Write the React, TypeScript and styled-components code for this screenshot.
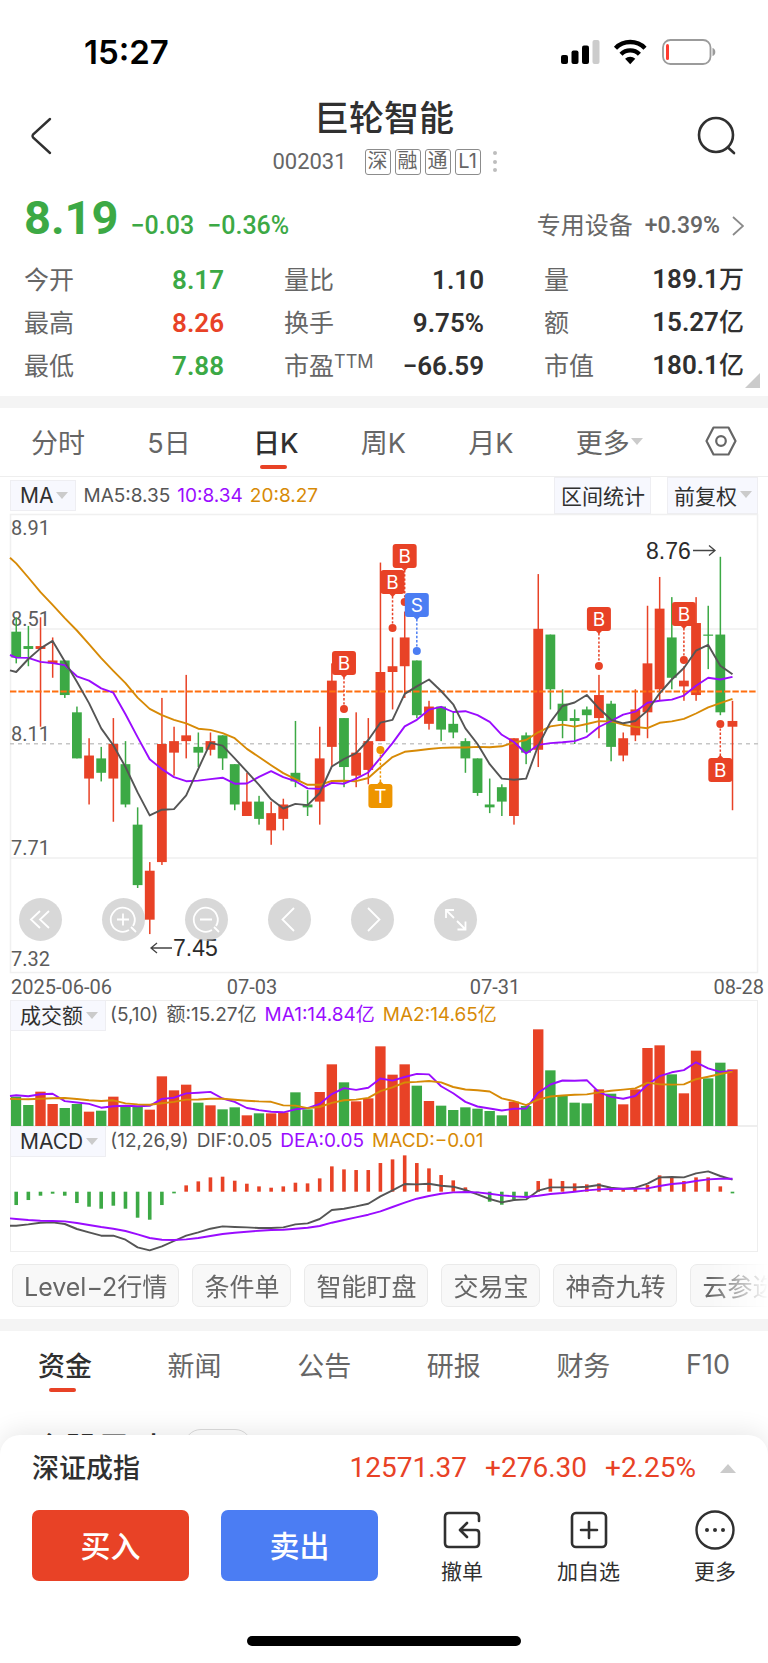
import React from 'react';
import styled, { createGlobalStyle } from 'styled-components';

const RED = '#e84226';
const GREEN = '#3ca945';
const BLUE = '#4b7df3';
const AMBER = '#ee9500';
const MA_GRAY = '#555555';
const MA_PURPLE = '#9a0cff';
const MA_GOLD = '#d78a06';
const INK = '#303030';
const MUTED = '#666666';

const TEXT_FONT = "Inter, 'Noto Sans CJK SC', sans-serif";
const NUM_FONT = "Roboto, 'Noto Sans CJK SC', sans-serif";

const GlobalStyle = createGlobalStyle`
  * { box-sizing: border-box; }
  body { margin: 0; background: #fff; color: ${INK}; font-family: ${TEXT_FONT}; }
  button { font: inherit; color: inherit; border: 0; padding: 0; background: none; cursor: pointer; }
  a { color: inherit; text-decoration: none; }
`;

/* ---------- market data ---------- */

type Candle = [open: number, close: number, high: number, low: number];

const candles: Candle[] = [
  [8.5, 8.41, 8.55, 8.39], [8.45, 8.44, 8.52, 8.38], [8.44, 8.45, 8.55, 8.17], [8.39, 8.4, 8.48, 8.34],
  [8.4, 8.28, 8.4, 8.27], [8.22, 8.06, 8.24, 8.06], [7.99, 8.07, 8.13, 7.9], [8.06, 8.01, 8.1, 7.98],
  [7.99, 8.11, 8.2, 7.84], [8.04, 7.9, 8.12, 7.89], [7.83, 7.62, 7.89, 7.61], [7.5, 7.67, 7.7, 7.45],
  [7.7, 8.11, 8.27, 7.69], [8.08, 8.12, 8.17, 8.0], [8.12, 8.14, 8.35, 8.06], [8.1, 8.08, 8.15, 8.03],
  [8.09, 8.12, 8.15, 8.07], [8.14, 8.06, 8.14, 8.02], [8.04, 7.9, 8.04, 7.88], [7.86, 7.91, 8.01, 7.86],
  [7.91, 7.85, 7.93, 7.83], [7.81, 7.87, 7.91, 7.76], [7.85, 7.9, 7.92, 7.81], [8.01, 7.98, 8.19, 7.96],
  [7.9, 7.89, 7.95, 7.86], [7.91, 8.06, 8.17, 7.83], [8.1, 8.33, 8.39, 8.03], [8.2, 8.03, 8.2, 7.96],
  [8.0, 8.08, 8.22, 7.96], [8.02, 8.12, 8.2, 7.97], [8.12, 8.36, 8.74, 8.12], [8.36, 8.38, 8.48, 8.23],
  [8.38, 8.48, 8.57, 8.27], [8.4, 8.21, 8.4, 8.2], [8.18, 8.24, 8.26, 8.16], [8.24, 8.16, 8.24, 8.12],
  [8.18, 8.15, 8.22, 8.13], [8.12, 8.06, 8.13, 8.01], [8.06, 7.94, 8.06, 7.93], [7.9, 7.89, 7.99, 7.87],
  [7.96, 7.91, 7.97, 7.86], [7.86, 8.13, 8.13, 7.83], [8.14, 8.08, 8.15, 8.04], [8.09, 8.51, 8.7, 8.03],
  [8.49, 8.3, 8.49, 8.23], [8.25, 8.19, 8.3, 8.13], [8.2, 8.19, 8.23, 8.11], [8.23, 8.21, 8.24, 8.15],
  [8.2, 8.28, 8.35, 8.13], [8.25, 8.1, 8.26, 8.05], [8.07, 8.13, 8.15, 8.05], [8.14, 8.23, 8.3, 8.12],
  [8.22, 8.39, 8.59, 8.13], [8.3, 8.58, 8.69, 8.26], [8.48, 8.34, 8.62, 8.3], [8.31, 8.33, 8.38, 8.26],
  [8.28, 8.53, 8.62, 8.26], [8.49, 8.49, 8.59, 8.37], [8.49, 8.22, 8.76, 8.21], [8.17, 8.19, 8.26, 7.88],
];

const turnover = [
  88, 63, 103, 66, 54, 66, 43, 46, 88, 60, 60, 49, 149, 107, 124, 70, 62, 50, 56, 32,
  38, 38, 41, 101, 50, 102, 185, 131, 74, 83, 239, 154, 185, 121, 75, 61, 48, 56, 52, 45,
  32, 73, 60, 290, 167, 92, 70, 68, 110, 97, 65, 110, 234, 242, 155, 98, 226, 143, 190, 170,
];

const macd = [
  -40, -25, -12, -6, -12, -34, -45, -51, -42, -51, -78, -84, -40, -5, 19, 31, 43, 45, 33, 24,
  16, 12, 16, 27, 25, 40, 76, 67, 65, 65, 86, 97, 109, 86, 70, 50, 34, 13, -3, -30,
  -39, -24, -18, 32, 39, 32, 25, 22, 25, 9, 5, 9, 20, 49, 42, 32, 43, 43, 16, -5,
];

const dif = [
  -102, -98, -93, -92, -97, -112, -122, -132, -132, -144, -167, -176, -164, -148, -132, -122, -111, -104, -106, -107,
  -109, -109, -107, -98, -95, -82, -55, -51, -44, -36, -14, 4, 23, 22, 24, 18, 15, 5, -8, -22,
  -32, -25, -23, 3, 13, 13, 13, 15, 20, 12, 8, 12, 24, 43, 44, 43, 55, 61, 47, 36,
];

const dea = [
  -82, -85, -87, -88, -89, -94, -100, -106, -111, -118, -128, -139, -144, -145, -143, -139, -133, -127, -123, -120,
  -117, -115, -114, -111, -108, -103, -93, -85, -77, -69, -59, -46, -33, -21, -13, -6, -2, -1, -2, -6,
  -11, -14, -16, -12, -7, -4, 0, 4, 7, 8, 9, 9, 10, 17, 23, 26, 32, 37, 39, 39,
];

/* Averages whose window opens before the first visible day start from known values. */
const average = (values: number[], span: number, known: number[]) =>
  values.map((_, i) =>
    i < known.length ? known[i] : values.slice(i - span + 1, i + 1).reduce((a, b) => a + b, 0) / span,
  );

const closes = candles.map((c) => c[1]);
const ma5 = average(closes, 5, [8.36, 8.405, 8.442, 8.468]);
const ma10 = average(closes, 10, [8.41, 8.409, 8.395, 8.391, 8.384, 8.345, 8.33, 8.303, 8.288]);
const ma20 = average(closes, 20, [
  8.737, 8.688, 8.637, 8.593, 8.547, 8.504, 8.457, 8.408, 8.364, 8.321, 8.271, 8.232, 8.21, 8.194, 8.182, 8.163,
  8.159, 8.148, 8.13,
]);
const vol5 = average(turnover, 5, [92, 89, 95, 97]);
const vol10 = average(turnover, 10, [81, 80, 82, 83, 84, 81, 77, 75, 77]);

/* ---------- scales ---------- */

const CHART_W = 748;
const xAt = (i: number) => 6.2 + i * 12.14;
const priceY = (p: number) => (8.91 - p) * 288 - 0.4;
const isUp = (i: number) => candles[i][1] > candles[i][0];

const linePath = (values: number[], y: (v: number) => number, lead?: number) =>
  (lead === undefined ? 'M' : `M0 ${y(lead).toFixed(1)}L`) +
  values.map((v, i) => `${xAt(i).toFixed(1)} ${y(v).toFixed(1)}`).join('L');

/* ---------- shared pieces ---------- */

const Page = styled.div`
  min-height: 100vh;
  display: flex;
  flex-direction: column;
  overflow-x: hidden;
`;

const Caret = styled.span<{ $up?: boolean }>`
  display: inline-block;
  flex: none;
  border: 0 solid transparent;
  ${(p) =>
    p.$up
      ? 'border-width: 0 8px 9px; border-bottom-color: #cbcbcb;'
      : 'border-width: 7px 6px 0; border-top-color: #cbcbcb;'}
`;

const Band = styled.div`
  height: 12px;
  background: #f4f4f4;
`;

/* ---------- status bar and header ---------- */

const StatusBar = styled.div`
  display: flex;
  justify-content: space-between;
  align-items: center;
  height: 82px;
  padding: 21px 51px 0 84px;
`;

const Clock = styled.span`
  font: 600 33px/40px Inter, sans-serif;
  color: #000;
`;

const Header = styled.header`
  display: flex;
  justify-content: space-between;
  align-items: center;
  height: 108px;
  padding: 0 28px;
`;

const IconButton = styled.button`
  display: flex;
`;

const Heading = styled.div`
  display: flex;
  flex-direction: column;
  align-items: center;
  gap: 6px;
  padding-bottom: 3px;
`;

const Title = styled.h1`
  margin: 0;
  font-size: 35px;
  line-height: 48px;
  font-weight: 500;
`;

const CodeRow = styled.div`
  display: flex;
  align-items: center;
  gap: 4px;
  padding-left: 11px;
  color: ${MUTED};
`;

const Code = styled.span`
  margin-right: 14px;
  font: 22px/28px ${NUM_FONT};
`;

const Tag = styled.span`
  width: 26px;
  height: 26px;
  border: 1px solid #8c8c8c;
  border-radius: 3px;
  font-size: 20px;
  line-height: 23px;
  text-align: center;
`;

/* ---------- quote ---------- */

const Quote = styled.section`
  position: relative;
  padding: 0 24px;
  height: 206px;
`;

const PriceRow = styled.div`
  display: flex;
  align-items: baseline;
  height: 68px;
  font-family: ${NUM_FONT};
  color: ${GREEN};
`;

const Price = styled.span`
  font-size: 47px;
  line-height: 56px;
  font-weight: 700;
  margin-right: 12px;
`;

const Change = styled.span`
  font-size: 25px;
  font-weight: 500;
  margin-right: 13px;
`;

const Sector = styled.a`
  display: flex;
  align-items: center;
  gap: 12px;
  margin-left: auto;
  color: ${MUTED};
  font-size: 24px;
  line-height: 32px;
`;

const SectorChange = styled.span`
  font: 500 23px/32px ${NUM_FONT};
`;

const Stats = styled.dl`
  display: grid;
  grid-template-columns: 200px 200px 200px;
  justify-content: space-between;
  margin: 0;
`;

const Stat = styled.div`
  display: flex;
  justify-content: space-between;
  align-items: center;
  height: 43px;
`;

const StatName = styled.dt`
  font-size: 25px;
  line-height: 36px;
  color: ${MUTED};
  sup { font-size: 18px; line-height: 0; vertical-align: 7px; }
`;

const StatValue = styled.dd<{ $color?: string }>`
  margin: 0;
  font: 600 26px/36px ${NUM_FONT};
  color: ${(p) => p.$color ?? INK};
  span { font-size: 25px; font-weight: 500; }
`;

const Corner = styled.span`
  position: absolute;
  right: 8px;
  bottom: 8px;
  border-left: 15px solid transparent;
  border-bottom: 15px solid #cbcbcb;
`;

/* ---------- tabs ---------- */

const Tabs = styled.nav<{ $tall?: boolean }>`
  display: flex;
  justify-content: space-between;
  align-items: center;
  height: 69px;
  padding: ${(p) => (p.$tall ? '0 38px 2px' : '0 31px 2px')};
  border-bottom: 1px solid ${(p) => (p.$tall ? 'transparent' : '#eeeeee')};
`;

const Tab = styled.button<{ $active?: boolean }>`
  position: relative;
  display: flex;
  align-items: center;
  gap: 1px;
  height: 56px;
  font-size: 27px;
  font-weight: ${(p) => (p.$active ? 500 : 400)};
  color: ${(p) => (p.$active ? INK : MUTED)};
  &::after {
    content: '';
    display: ${(p) => (p.$active ? 'block' : 'none')};
    position: absolute;
    left: calc(50% - 16px);
    bottom: 0;
    width: 27px;
    height: 4px;
    border-radius: 2px;
    background: ${RED};
  }
`;

/* ---------- chart ---------- */

const Chart = styled.section`
  padding: 0 10px;
`;

const LegendRow = styled.div`
  display: flex;
  align-items: center;
  height: 37px;
  font-size: 19px;
`;

const Picker = styled.button`
  display: flex;
  align-items: center;
  gap: 3px;
  height: 31px;
  padding: 0 7px 0 9px;
  background: #f7f8fe;
  border: 1px solid #eeeef2;
  font-size: 21px;
  white-space: nowrap;
`;

const RangeButton = styled(Picker)`
  height: 37px;
  padding: 0 5px 2px 6px;
`;

const Legend = styled.span<{ $color?: string }>`
  margin-left: 7px;
  color: ${(p) => p.$color ?? MA_GRAY};
  white-space: nowrap;
`;

const RightPickers = styled.div`
  display: flex;
  gap: 16px;
  margin-left: auto;
`;

const Plot = styled.svg`
  display: block;
  width: 100%;
  height: auto;
  overflow: visible;
`;

const PlotArea = styled.div`
  position: relative;
`;

const ToolRow = styled.div`
  position: absolute;
  left: 9px;
  bottom: 59px;
  display: flex;
  gap: 40px;
`;

const ToolButton = styled.button`
  width: 43px;
  height: 43px;
  border-radius: 50%;
  background: rgba(190, 190, 190, 0.6);
  svg { display: block; }
`;

const Panel = styled.div`
  box-shadow: inset 0 0 0 1px #eeeeee;
`;

const PanelHead = styled.div`
  display: flex;
  height: 30px;
  font-size: 19px;
  line-height: 29px;
  ${Picker} { margin-right: -3px; }
  ${Legend} + ${Legend} { margin-left: 8px; }
`;

/* ---------- shortcuts ---------- */

const Shortcuts = styled.div`
  display: flex;
  gap: 13px;
  padding: 12px 0 12px 12px;
  overflow: hidden;
  mask-image: linear-gradient(to right, #000 calc(100% - 58px), transparent);
`;

const Shortcut = styled.button`
  flex: none;
  height: 43px;
  padding: 0 11px 2px;
  border: 1px solid #eaeaea;
  border-radius: 7px;
  background: #f8f8f8;
  color: ${MUTED};
  font-size: 25px;
`;

const Preview = styled.section`
  display: flex;
  align-items: flex-start;
  gap: 20px;
  height: 35px;
  padding: 29px 32px 0;
  overflow: hidden;
  h2 { margin: 0; font-size: 33px; line-height: 40px; font-weight: 500; }
  span { flex: none; width: 68px; height: 34px; border: 1px solid #dddddd; border-radius: 17px; }
`;

/* ---------- bottom sheet ---------- */

const Sheet = styled.footer`
  position: relative;
  flex: 1;
  border-radius: 20px 20px 0 0;
  background: #fff;
  box-shadow: 0 -4px 24px rgba(0, 0, 0, 0.09);
  padding: 0 32px 17px;
  display: flex;
  flex-direction: column;
`;

const IndexRow = styled.div`
  display: flex;
  align-items: center;
  height: 66px;
  gap: 24px;
  font-size: 27px;
  font-weight: 500;
`;

const IndexName = styled.span`
  padding-bottom: 3px;
`;

const IndexNumbers = styled.span`
  display: flex;
  gap: 18px;
  margin-left: auto;
  font: 28px/36px ${NUM_FONT};
  color: ${RED};
`;

const Actions = styled.div`
  display: flex;
  align-items: flex-start;
  padding-top: 9px;
`;

const Trade = styled.button<{ $color: string }>`
  width: 157px;
  height: 71px;
  padding-bottom: 4px;
  margin-right: 32px;
  border-radius: 7px;
  background: ${(p) => p.$color};
  color: #fff;
  font-size: 30px;
  font-weight: 500;
`;

const MiniActions = styled.div`
  flex: 1;
  display: flex;
  justify-content: space-between;
  margin-left: 31px;
`;

const MiniAction = styled.button`
  display: flex;
  flex-direction: column;
  align-items: center;
  gap: 7px;
  font-size: 21px;
  line-height: 30px;
`;

const HomeBar = styled.div`
  width: 274px;
  height: 10px;
  margin: auto auto 0;
  border-radius: 5px;
  background: #000;
`;

/* ---------- chart drawings ---------- */

interface MarkerProps { i: number; tag: number; dot: number; label: string; color: string }

const markers: MarkerProps[] = [
  { i: 32, tag: 42, dot: 88, label: 'B', color: RED },
  { i: 27, tag: 149, dot: 195, label: 'B', color: RED },
  { i: 31, tag: 68, dot: 114, label: 'B', color: RED },
  { i: 33, tag: 91, dot: 137, label: 'S', color: BLUE },
  { i: 30, tag: 282, dot: 236, label: 'T', color: AMBER },
  { i: 48, tag: 105, dot: 152, label: 'B', color: RED },
  { i: 55, tag: 100, dot: 146, label: 'B', color: RED },
  { i: 58, tag: 256, dot: 210, label: 'B', color: RED },
];

const Marker = ({ i, tag, dot, label, color }: MarkerProps) => {
  const x = xAt(i);
  const dir = dot > tag ? 1 : -1;
  return (
    <g>
      <line x1={x} x2={x} y1={tag + dir * 14} y2={dot} stroke={color} strokeWidth="1.5" strokeDasharray="2.4 1.8" />
      <circle cx={x} cy={dot} r="4" fill={color} />
      <path d={`M${x - 4} ${tag + dir * 11}h8l-4 ${dir * 4}z`} fill={color} />
      <rect x={x - 12} y={tag - 12} width="24" height="24" rx="3" fill={color} />
      <text x={x} y={tag + 7} textAnchor="middle" fontFamily="Inter, sans-serif" fontSize="19" fill="#fff">{label}</text>
    </g>
  );
};

const PricePlot = () => (
  <Plot viewBox={`0 0 ${CHART_W} 486`} role="img" aria-label="日K线图">
    <g stroke="#f0f0f0" strokeWidth="1.5" fill="none">
      <rect x="0.5" y="0.5" width="747" height="458" />
      <path d="M0 115H748M0 344H748" />
    </g>
    <path d="M0 229.7H748" stroke="#c6c6c6" strokeWidth="1.4" strokeDasharray="4 4" />
    <g fontFamily={NUM_FONT} fontSize="20" fill="#5c5c5c">
      <text x="1" y="21">8.91</text>
      <text x="1" y="112">8.51</text>
      <text x="1" y="227">8.11</text>
      <text x="1" y="341">7.71</text>
      <text x="1" y="452">7.32</text>
      <text x="1" y="480">2025-06-06</text>
      <text x="242" y="480" textAnchor="middle">07-03</text>
      <text x="485" y="480" textAnchor="middle">07-31</text>
      <text x="754" y="480" textAnchor="end">08-28</text>
    </g>
    {candles.map(([open, close, high, low], i) => {
      const x = xAt(i);
      const top = priceY(Math.max(open, close));
      const color = isUp(i) ? RED : GREEN;
      return (
        <g key={i} fill={color}>
          <rect x={x - 0.7} y={priceY(high)} width="1.5" height={(high - low) * 288} />
          <rect x={x - 4.9} y={top} width="9.8" height={Math.max(1.2, Math.abs(open - close) * 288)} />
        </g>
      );
    })}
    <path d="M0 177.5H746" stroke="#ff6f0f" strokeWidth="1.8" strokeDasharray="6.4 2" />
    <g fill="none" strokeWidth="1.9" strokeLinejoin="round">
      <path d={linePath(ma20, priceY, 8.757)} stroke={MA_GOLD} />
      <path d={linePath(ma10, priceY, 8.419)} stroke={MA_PURPLE} />
      <path d={linePath(ma5, priceY, 8.366)} stroke={MA_GRAY} />
    </g>
    {markers.map((m) => <Marker key={m.i} {...m} />)}
    <g fontFamily="'Liberation Sans', sans-serif" fontSize="23" fill="#2b2b2b">
      <text x="636" y="45">8.76</text>
      <text x="163" y="442">7.45</text>
    </g>
    <path d="M683 36.500H705M699 31.500l6 5-6 5M162 434H141M147 429l-6 5 6 5" fill="none" stroke="#444" strokeWidth="1.3" />
  </Plot>
);

const turnoverY = (v: number) => 96 - v / 3;

const TurnoverPlot = () => (
  <Plot viewBox={`0 0 ${CHART_W} 96`} role="img" aria-label="成交额">
    {turnover.map((v, i) => (
      <rect
        key={i}
        x={Math.max(1, xAt(i) - 5.2)}
        y={turnoverY(v)}
        width={i === 0 ? 10.2 : 10.4}
        height={v / 3}
        fill={isUp(i) ? RED : GREEN}
      />
    ))}
    <g fill="none" strokeWidth="1.9" strokeLinejoin="round">
      <path d={linePath(vol5, turnoverY, 90)} stroke={MA_PURPLE} />
      <path d={linePath(vol10, turnoverY, 82)} stroke={MA_GOLD} />
    </g>
  </Plot>
);

const macdY = (v: number) => 35.7 - v / 3;

const MacdPlot = () => (
  <Plot viewBox={`0 0 ${CHART_W} 96`} role="img" aria-label="MACD">
    {macd.map((v, i) => (
      <rect
        key={i}
        x={xAt(i) - 1.8}
        y={Math.min(macdY(0), macdY(v))}
        width="3.6"
        height={Math.abs(v) / 3}
        fill={v > 0 ? RED : GREEN}
      />
    ))}
    <g fill="none" strokeWidth="1.9" strokeLinejoin="round">
      <path d={linePath(dif, macdY, -102)} stroke={MA_GRAY} />
      <path d={linePath(dea, macdY, -80)} stroke={MA_PURPLE} />
    </g>
  </Plot>
);

/* ---------- icons ---------- */

const SignalIcons = () => (
  <svg width="156" height="26" viewBox="0 0 156 26" aria-hidden="true">
    <rect x="0" y="16" width="7" height="9" rx="2" />
    <rect x="10.5" y="11.5" width="7" height="13.5" rx="2" />
    <rect x="21" y="6.5" width="7" height="18.5" rx="2" />
    <rect x="31.5" y="1" width="7" height="24" rx="2" fill="#cccccc" />
    <g fill="none" stroke="#000" strokeWidth="4.4">
      <path d="M54.500 9.200a20.800 20.800 0 0 1 29.500 0" />
      <path d="M60 15.200a13 13 0 0 1 18.400 0" />
    </g>
    <path d="M69.200 25.200l-5.100-5.400a7.600 7.600 0 0 1 10.200 0z" />
    <rect x="102" y="1" width="47.5" height="24" rx="7.5" fill="none" stroke="#9b9b9b" strokeWidth="1.8" />
    <rect x="105" y="5" width="3" height="16" rx="1.5" fill="#ff3b30" />
    <path d="M151.500 9v8c2-.6 2.800-2 2.800-4s-.8-3.400-2.800-4z" fill="#9b9b9b" />
  </svg>
);

const tools: [name: string, path: string][] = [
  ['最早', 'M21 13l-9 8.500 9 8.500M30 13l-9 8.500 9 8.500'],
  ['放大', 'M31 28a12 12 0 1 0-4 4M29 29l5 5M15 21.500h12M21 15.500v12'],
  ['缩小', 'M31 28a12 12 0 1 0-4 4M29 29l5 5M15 21.500h12'],
  ['前移', 'M26 10l-11.500 11.500 11.500 11.500'],
  ['后移', 'M17 10l11.500 11.500-11.500 11.500'],
  ['全屏', 'M20 20l-8-8M12 20v-8h8M23 23l8.500 8.500M31.500 23.500v8h-8'],
];

const stats: [React.ReactNode, string, string, string?][] = [
  ['今开', '8.17', '', GREEN],
  ['量比', '1.10', ''],
  ['量', '189.1', '万'],
  ['最高', '8.26', '', RED],
  ['换手', '9.75%', ''],
  ['额', '15.27', '亿'],
  ['最低', '7.88', '', GREEN],
  [<>市盈<sup>TTM</sup></>, '−66.59', ''],
  ['市值', '180.1', '亿'],
];

export default function App() {
  return (
    <Page>
      <GlobalStyle />
      <StatusBar>
        <Clock>15:27</Clock>
        <SignalIcons />
      </StatusBar>

      <Header>
        <IconButton aria-label="返回">
          <svg width="44" height="40" viewBox="0 0 44 40" fill="none" stroke={INK} strokeWidth="2.4" strokeLinecap="round">
            <path d="M22 3L5 18.500Q4 20 5 21.500L22 37" />
          </svg>
        </IconButton>
        <Heading>
          <Title>巨轮智能</Title>
          <CodeRow>
            <Code>002031</Code>
            <Tag>深</Tag>
            <Tag>融</Tag>
            <Tag>通</Tag>
            <Tag>L1</Tag>
            <svg width="22" height="28" viewBox="0 0 22 28" fill="#bdbdbd" aria-hidden="true">
              <circle cx="10" cy="5" r="2" /><circle cx="10" cy="14" r="2" /><circle cx="10" cy="22" r="2" />
            </svg>
          </CodeRow>
        </Heading>
        <IconButton aria-label="搜索">
          <svg width="44" height="44" viewBox="0 0 44 44" fill="none" stroke={INK} strokeWidth="2.6" strokeLinecap="round">
            <circle cx="20" cy="21" r="17" /><path d="M32 33.500l6 5.500" />
          </svg>
        </IconButton>
      </Header>

      <Quote>
        <PriceRow>
          <Price>8.19</Price>
          <Change>−0.03</Change>
          <Change>−0.36%</Change>
          <Sector href="#sector">
            专用设备
            <SectorChange>+0.39%</SectorChange>
            <svg width="12" height="20" viewBox="0 0 12 20" fill="none" stroke="#8a8a8a" strokeWidth="1.8">
              <path d="M1 1l10 9-10 9" />
            </svg>
          </Sector>
        </PriceRow>
        <Stats>
          {stats.map(([name, value, unit, color]) => (
            <Stat key={value}>
              <StatName>{name}</StatName>
              <StatValue $color={color}>{value}{unit && <span>{unit}</span>}</StatValue>
            </Stat>
          ))}
        </Stats>
        <Corner />
      </Quote>

      <Band />
      <Tabs>
        <Tab>分时</Tab>
        <Tab>5日</Tab>
        <Tab $active>日K</Tab>
        <Tab>周K</Tab>
        <Tab>月K</Tab>
        <Tab>更多<Caret /></Tab>
        <IconButton aria-label="设置">
          <svg width="32" height="32" viewBox="0 0 32 32" fill="none" stroke={MUTED} strokeWidth="2.2" strokeLinejoin="round">
            <path d="M8.500 2.500h15l7 13.500-7 13.500h-15L1.500 16z" /><circle cx="16" cy="16" r="4.800" />
          </svg>
        </IconButton>
      </Tabs>

      <Chart>
        <LegendRow>
          <Picker>MA<Caret /></Picker>
          <Legend>MA5:8.35</Legend>
          <Legend $color={MA_PURPLE}>10:8.34</Legend>
          <Legend $color={MA_GOLD}>20:8.27</Legend>
          <RightPickers>
            <RangeButton>区间统计</RangeButton>
            <RangeButton>前复权<Caret /></RangeButton>
          </RightPickers>
        </LegendRow>
        <PlotArea>
          <PricePlot />
          <ToolRow>
            {tools.map(([name, path]) => (
              <ToolButton key={name} aria-label={name}>
                <svg width="43" height="43" viewBox="0 0 43 43" fill="none" stroke="#fff" strokeWidth="1.8">
                  <path d={path} />
                </svg>
              </ToolButton>
            ))}
          </ToolRow>
        </PlotArea>
        <Panel>
          <PanelHead>
            <Picker>成交额<Caret /></Picker>
            <Legend>(5,10)</Legend>
            <Legend>额:15.27亿</Legend>
            <Legend $color={MA_PURPLE}>MA1:14.84亿</Legend>
            <Legend $color={MA_GOLD}>MA2:14.65亿</Legend>
          </PanelHead>
          <TurnoverPlot />
        </Panel>
        <Panel>
          <PanelHead>
            <Picker>MACD<Caret /></Picker>
            <Legend>(12,26,9)</Legend>
            <Legend>DIF:0.05</Legend>
            <Legend $color={MA_PURPLE}>DEA:0.05</Legend>
            <Legend $color={MA_GOLD}>MACD:−0.01</Legend>
          </PanelHead>
          <MacdPlot />
        </Panel>
      </Chart>

      <Shortcuts>
        <Shortcut>Level−2行情</Shortcut>
        <Shortcut>条件单</Shortcut>
        <Shortcut>智能盯盘</Shortcut>
        <Shortcut>交易宝</Shortcut>
        <Shortcut>神奇九转</Shortcut>
        <Shortcut>云参选股</Shortcut>
      </Shortcuts>

      <Band />
      <Tabs $tall>
        <Tab $active>资金</Tab>
        <Tab>新闻</Tab>
        <Tab>公告</Tab>
        <Tab>研报</Tab>
        <Tab>财务</Tab>
        <Tab>F10</Tab>
      </Tabs>
      <Preview>
        <h2>个股异动</h2>
        <span />
      </Preview>

      <Sheet>
        <IndexRow>
          <IndexName>深证成指</IndexName>
          <IndexNumbers>
            <span>12571.37</span>
            <span>+276.30</span>
            <span>+2.25%</span>
          </IndexNumbers>
          <Caret $up />
        </IndexRow>
        <Actions>
          <Trade $color={RED}>买入</Trade>
          <Trade $color={BLUE}>卖出</Trade>
          <MiniActions>
            <MiniAction>
              <svg width="40" height="40" viewBox="0 0 40 40" fill="none" stroke={INK} strokeWidth="2.6" strokeLinecap="round" strokeLinejoin="round">
                <path d="M37 11V7q0-4-4-4H7Q3 3 3 7v26q0 4 4 4h26q4 0 4-4V23q0-3-3-3H19M25 13l-7 7 7 7" />
              </svg>
              撤单
            </MiniAction>
            <MiniAction>
              <svg width="40" height="40" viewBox="0 0 40 40" fill="none" stroke={INK} strokeWidth="2.6" strokeLinecap="round">
                <rect x="3" y="3" width="34" height="34" rx="4" /><path d="M12 20h16M20 12v16" />
              </svg>
              加自选
            </MiniAction>
            <MiniAction>
              <svg width="40" height="40" viewBox="0 0 40 40" fill={INK}>
                <circle cx="20" cy="20" r="18.500" fill="none" stroke={INK} strokeWidth="2.400" />
                <circle cx="12" cy="20" r="2" /><circle cx="20" cy="20" r="2" /><circle cx="28" cy="20" r="2" />
              </svg>
              更多
            </MiniAction>
          </MiniActions>
        </Actions>
        <HomeBar />
      </Sheet>
    </Page>
  );
}
